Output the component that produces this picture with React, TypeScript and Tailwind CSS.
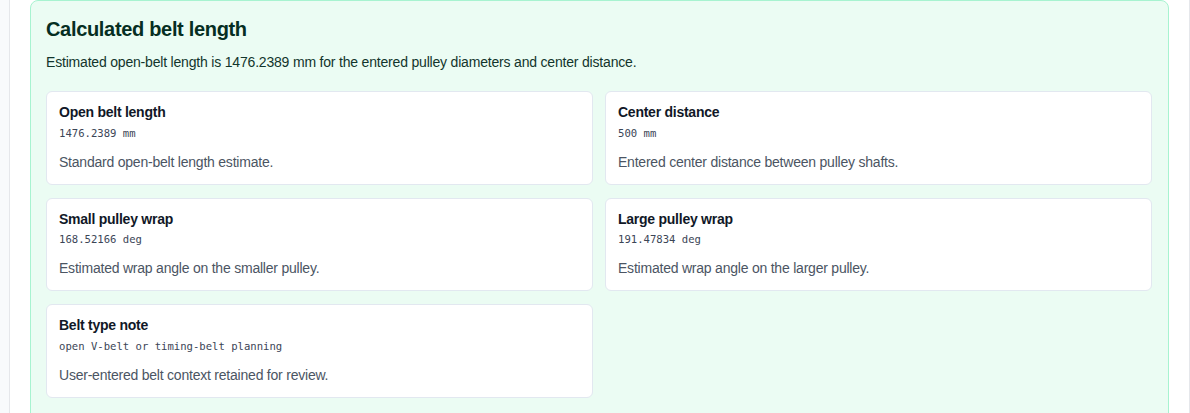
const results = [
  { label: 'Open belt length', value: '1476.2389 mm', note: 'Standard open-belt length estimate.' },
  { label: 'Center distance', value: '500 mm', note: 'Entered center distance between pulley shafts.' },
  { label: 'Small pulley wrap', value: '168.52166 deg', note: 'Estimated wrap angle on the smaller pulley.' },
  { label: 'Large pulley wrap', value: '191.47834 deg', note: 'Estimated wrap angle on the larger pulley.' },
  { label: 'Belt type note', value: 'open V-belt or timing-belt planning', note: 'User-entered belt context retained for review.' },
];

function ResultCard({ label, value, note }: { label: string; value: string; note: string }) {
  return (
    <div className="bg-white border border-[#e2e8f0] rounded-md p-3">
      <h3 className="text-sm font-bold leading-tight tracking-[-0.25px] text-[#111827]">{label}</h3>
      <p className="mt-[3px] font-['DejaVu_Sans_Mono',monospace] text-[10.6px] leading-4 text-[#3b4556]">{value}</p>
      <p className="mt-[11px] text-sm leading-5 tracking-[-0.22px] text-[#4b5563]">{note}</p>
    </div>
  );
}

export default function App() {
  return (
    <div className="min-h-screen bg-[#f8fafc] pl-[9px] font-['Liberation_Sans',Arial,sans-serif]">
      <div className="min-h-screen bg-white border-x border-[#e5e7eb] px-5">
        {/* Result panel */}
        <section className="bg-[#ebfcf3] border border-[#a7f3d0] rounded-lg pl-[15px] pr-4 pt-4 pb-6">
          <h2 className="text-xl font-bold leading-6 tracking-[-0.32px] text-[#052e22]">Calculated belt length</h2>
          <p className="mt-[11px] text-sm leading-5 tracking-[-0.19px] text-[#12352c]">
            Estimated open-belt length is 1476.2389 mm for the entered pulley diameters and center distance.
          </p>
          <div className="mt-[19px] grid grid-cols-2 gap-x-3 gap-y-[13px]">
            {results.map((r) => (
              <ResultCard key={r.label} {...r} />
            ))}
          </div>
        </section>
      </div>
    </div>
  );
}
